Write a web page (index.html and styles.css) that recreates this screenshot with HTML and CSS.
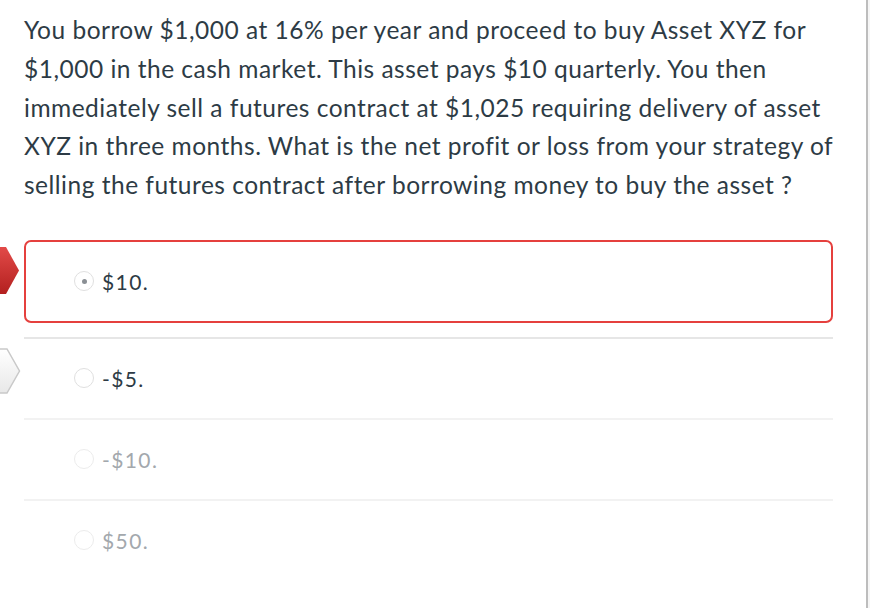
FILE: index.html
```html
<!DOCTYPE html>
<html>
<head>
<meta charset="utf-8">
<link rel="stylesheet" href="styles.css">
</head>
<body>
<div class="page">
  <div class="question">You borrow $1,000 at 16% per year and proceed to buy Asset XYZ for $1,000 in the cash market. This asset pays $10 quarterly. You then immediately sell a futures contract at $1,025 requiring delivery of asset XYZ in three months. What is the net profit or loss from your strategy of selling the futures contract after borrowing money to buy the asset ?</div>
  <div class="answers">
    <svg class="flag flag-red" width="20" height="50" viewBox="0 0 20 50">
      <defs><linearGradient id="gr" x1="0" y1="0" x2="0" y2="1"><stop offset="0" stop-color="#e24a48"/><stop offset="1" stop-color="#b3201f"/></linearGradient></defs>
      <path d="M0 0 L6 0 L19 23.5 L6 47 L0 47 Z" fill="url(#gr)"/>
    </svg>
    <svg class="flag flag-white" width="22" height="48" viewBox="0 0 22 48">
      <defs><linearGradient id="gw" x1="0" y1="0" x2="0" y2="1"><stop offset="0" stop-color="#ffffff"/><stop offset="1" stop-color="#e8e8e8"/></linearGradient></defs>
      <path d="M-2 1 L7 1 L19.5 23 L7 45 L-2 45 Z" fill="url(#gw)" stroke="#c9c9c9" stroke-width="1.5"/>
    </svg>
    <div class="answer selected"><span class="radio checked"></span><span class="label">$10.</span></div>
    <div class="answer"><span class="radio"></span><span class="label">-$5.</span></div>
    <div class="answer faded"><span class="radio"></span><span class="label">-$10.</span></div>
    <div class="answer faded"><span class="radio"></span><span class="label">$50.</span></div>
  </div>
</div>
</body>
</html>
```
FILE: styles.css
```css
html, body {
  margin: 0;
  padding: 0;
  background: #f6f6f6;
}
body {
  font-family: Lato, "Open Sans", sans-serif;
  color: #2d3b45;
}
.page {
  width: 868px;
  height: 608px;
  background: #fff;
  border-right: 2px solid #bdbdbd;
  box-sizing: border-box;
  position: relative;
}
.question {
  padding: 11px 26px 0 24px;
  font-size: 24.5px;
  letter-spacing: 0.5px;
  line-height: 38.75px;
}
.answers {
  position: relative;
  margin: 35px 33px 0 24px;
}
.flag {
  position: absolute;
  display: block;
}
.flag-red {
  left: -24px;
  top: 7px;
}
.flag-white {
  left: -24px;
  top: 108px;
}
.answer {
  display: flex;
  align-items: center;
  height: 79px;
  padding-left: 50px;
  font-size: 21px;
  letter-spacing: 1.4px;
  border-top: 2px solid #f2f2f2;
}
.answer.selected {
  height: 83px;
  box-sizing: border-box;
  border: 2px solid #e5403e;
  border-radius: 7px;
  margin-bottom: 14px;
  padding-left: 48px;
}
.answer.selected + .answer {
  border-top-color: #e6e6e6;
}
.radio {
  width: 18px;
  height: 18px;
  border: 1.5px solid #e0e0e0;
  border-radius: 50%;
  margin-right: 8px;
  display: flex;
  align-items: center;
  justify-content: center;
  background: #fff;
}
.radio.checked::after {
  content: "";
  width: 5px;
  height: 5px;
  border-radius: 50%;
  background: #8a8f94;
}
.faded .label {
  color: #a3a8ad;
}
.faded .radio {
  border-color: #ececec;
}
```
